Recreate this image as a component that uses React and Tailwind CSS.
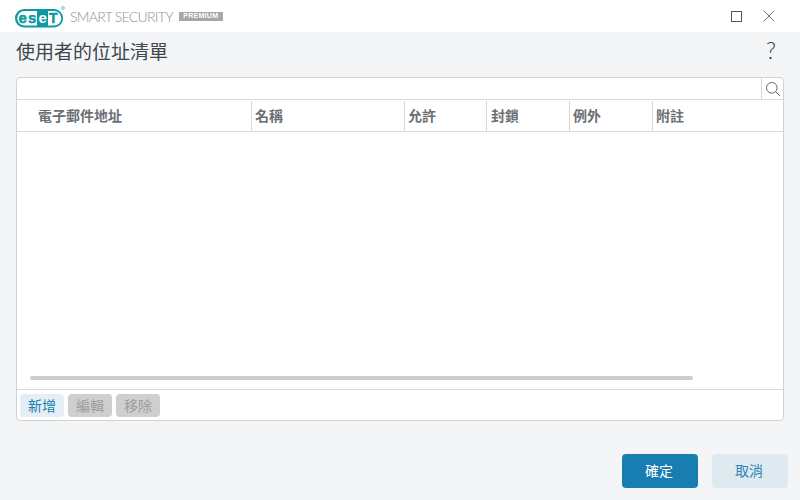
import React from 'react';
import { X } from 'lucide-react';

const font = { fontFamily: '"Noto Sans CJK TC", "Liberation Sans", sans-serif' };

const columns = [
  { label: '電子郵件地址', width: 'w-[235px]', pad: 'pl-[21px]' },
  { label: '名稱', width: 'w-[153px]', pad: 'pl-[3px]' },
  { label: '允許', width: 'w-[82px]', pad: 'pl-[3px]' },
  { label: '封鎖', width: 'w-[83px]', pad: 'pl-[4px]' },
  { label: '例外', width: 'w-[83px]', pad: 'pl-[3px]' },
  { label: '附註', width: 'flex-1', pad: 'pl-[3px]' },
];

const EsetLogo = () => (
  <svg width="50" height="22" viewBox="0 0 50 22" className="mt-[1px]">
    <rect x="0" y="3" width="48" height="18.5" rx="9" fill="#0e9aa0" />
    <path d="M9.5 5H22V19.5H9.5a7.25 7.25 0 0 1 0-14.5Z" fill="#fff" />
    <path d="M33 5H39a7.25 7.25 0 0 1 0 14.5H33Z" fill="#fff" />
    <text x="3.4" y="17" fontSize="15" fontWeight="700" fill="#0e9aa0" stroke="#0e9aa0" strokeWidth="0.5" fontFamily="Liberation Sans">e</text>
    <text x="13" y="17" fontSize="15" fontWeight="700" fill="#0e9aa0" stroke="#0e9aa0" strokeWidth="0.5" fontFamily="Liberation Sans">s</text>
    <text x="23.6" y="17" fontSize="15" fontWeight="700" fill="#fff" fontFamily="Liberation Sans">e</text>
    <text x="34" y="17" fontSize="14" fontWeight="700" fill="#0e9aa0" stroke="#0e9aa0" strokeWidth="0.5" fontFamily="Liberation Sans">T</text>
    <circle cx="48" cy="2" r="1.4" fill="none" stroke="#0e9aa0" strokeWidth="0.6" />
  </svg>
);

export default function App() {
  return (
    <div className="w-[800px] h-[500px] bg-[#f3f5f7] flex flex-col overflow-hidden" style={font}>
      {/* Title bar */}
      <div className="h-8 bg-white flex items-center justify-between pl-[15px]">
        <div className="flex items-center">
          <EsetLogo />
          <span className="ml-[5px] text-[14px] font-light text-[#8f9296] tracking-[-0.7px]" style={{ fontFamily: 'Lato, sans-serif' }}>SMART SECURITY</span>
          <span className="ml-[6px] h-[9px] w-[44px] bg-[#a5a8ab] text-white text-[7px] font-bold flex items-center justify-center tracking-[0.3px]" style={{ fontFamily: 'Liberation Sans, sans-serif' }}>PREMIUM</span>
        </div>
        <div className="flex items-center gap-[17px] pr-[21px]">
          <div className="w-[11px] h-[11px] border border-[#555]" />
          <X size={20} strokeWidth={0.8} className="text-[#333]" />
        </div>
      </div>

      {/* Heading */}
      <div className="h-[45px] flex items-center justify-between pl-4 pr-[24px] pb-2">
        <h1 className="text-[19px] leading-none font-normal text-[#3f464d]">使用者的位址清單</h1>
        <span className="text-[23px] leading-none font-light text-[#2f363d]" style={{ fontFamily: 'Lato, sans-serif' }}>?</span>
      </div>

      {/* Table panel */}
      <div className="mx-4 h-[344px] bg-white border border-[#d2d2d2] rounded-[4px] flex flex-col">
        <div className="h-[22px] flex justify-end border-b border-[#d9d9d9]">
          <div className="w-[22px] border-l border-[#d9d9d9] flex items-center justify-center">
            <svg width="16" height="16" viewBox="0 0 16 16" fill="none" stroke="#666" strokeWidth="1">
              <circle cx="6.8" cy="6.8" r="5.3" />
              <path d="M10.7 10.7 15 15" />
            </svg>
          </div>
        </div>
        <div className="h-[32px] flex border-b border-[#d9d9d9]">
          {columns.map((col, i) => (
            <div
              key={col.label}
              className={`${col.width} ${col.pad} ${i < columns.length - 1 ? 'border-r border-[#d9d9d9]' : ''} mt-[1px] flex items-center text-[14px] font-bold text-[#6b6f73] pb-[2px]`}
            >
              {col.label}
            </div>
          ))}
        </div>
        <div className="flex-1 flex items-end pl-[13px] pb-[9px]">
          <div className="w-[663px] h-[4px] rounded-full bg-[#cdcdcd]" />
        </div>
        <div className="h-[31px] border-t border-[#d9d9d9] flex items-center gap-1 px-[3px]">
          <button className="w-[44px] h-[23px] rounded-[4px] bg-[#e4eff5] text-[14px] text-[#1a7fb0]">新增</button>
          <button className="w-[44px] h-[23px] rounded-[4px] bg-[#cfcfcf] text-[14px] text-[#9d9d9d]">編輯</button>
          <button className="w-[44px] h-[23px] rounded-[4px] bg-[#cfcfcf] text-[14px] text-[#9d9d9d]">移除</button>
        </div>
      </div>

      {/* Footer */}
      <div className="flex justify-end gap-[14px] pr-3 pt-[33px]">
        <button className="w-[76px] h-[34px] rounded-[4px] bg-[#187db0] text-white text-[14px] pb-px pr-[2px]">確定</button>
        <button className="w-[76px] h-[34px] rounded-[4px] bg-[#dfe9f0] text-[#2a84b3] text-[14px] pb-px pr-[2px]">取消</button>
      </div>
    </div>
  );
}
